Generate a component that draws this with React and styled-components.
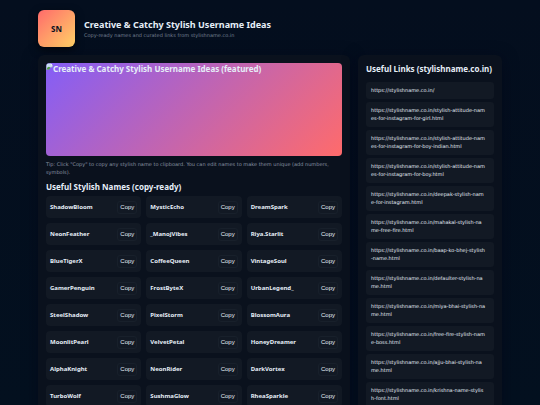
import React, { useState } from 'react';
import styled, { createGlobalStyle } from 'styled-components';

const names = [
  'ShadowBloom', 'MysticEcho', 'DreamSpark',
  'NeonFeather', '_ManojVibes', 'Riya.Starlit',
  'BlueTigerX', 'CoffeeQueen', 'VintageSoul',
  'GamerPenguin', 'FrostByteX', 'UrbanLegend_',
  'SteelShadow', 'PixelStorm', 'BlossomAura',
  'MoonlitPearl', 'VelvetPetal', 'HoneyDreamer',
  'AlphaKnight', 'NeonRider', 'DarkVortex',
  'TurboWolf', 'SushmaGlow', 'RheaSparkle',
];

const links = [
  '',
  'stylish-attitude-names-for-instagram-for-girl.html',
  'stylish-attitude-names-for-instagram-for-boy-indian.html',
  'stylish-attitude-names-for-instagram-for-boy.html',
  'deepak-stylish-name-for-instagram.html',
  'mahakal-stylish-name-free-fire.html',
  'baap-ko-bhej-stylish-name.html',
  'defaulter-stylish-name.html',
  'miya-bhai-stylish-name.html',
  'free-fire-stylish-name-boss.html',
  'ajju-bhai-stylish-name.html',
  'krishna-name-stylish-font.html',
].map(path => `https://stylishname.co.in/${path}`);

const smallFont = `'DejaVu Sans', 'Noto Sans', sans-serif`;

const GlobalStyle = createGlobalStyle`
  * {
    box-sizing: border-box;
  }

  body {
    margin: 0;
    height: 100vh;
    overflow: hidden;
    background: linear-gradient(180deg, #040e1e, #03101f);
    color: #e6eef8;
    font-family: 'Noto Sans', sans-serif;
    font-size: 8px;
  }
`;

const Wrap = styled.div`
  max-width: 480px;
  margin: 0 auto;
  padding: 10px 8px;
`;

const Header = styled.header`
  display: flex;
  align-items: center;
  gap: 9px;
  margin-bottom: 8px;
`;

const Logo = styled.div`
  display: grid;
  place-items: center;
  width: 37px;
  height: 37px;
  border-radius: 6px;
  background: linear-gradient(135deg, #ff6b6b, #ffd166);
  box-shadow: 0 3px 9px rgba(0, 0, 0, 0.6);
  color: #071021;
  font-weight: 700;
`;

const Title = styled.h1`
  margin: 0;
  font-size: 9px;
  line-height: 12px;
`;

const Lead = styled.p`
  margin: 0;
  color: #768193;
  font-family: ${smallFont};
  font-size: 5px;
  line-height: 8px;
`;

const Layout = styled.div`
  display: grid;
  grid-template-columns: minmax(0, 1fr) 144px;
  align-items: start;
  gap: 8px;
`;

const Panel = styled.section`
  padding: 8px;
  border-radius: 6px;
  background: #0a111d;
  box-shadow: 0 3px 15px rgba(2, 6, 23, 0.6);
`;

const Featured = styled.div`
  display: flex;
  align-items: flex-start;
  height: 93px;
  border-radius: 4px;
  overflow: hidden;
  background: linear-gradient(135deg, #845ef7, #ff6b6b);
  font-weight: 700;
  line-height: 12px;
`;

const Tip = styled.p`
  margin: 4px 0 5px;
  color: #8a95a6;
  font-family: ${smallFont};
  font-size: 5px;
  line-height: 8px;
`;

const Heading = styled.h2`
  margin: 0 0 ${p => p.$gap}px;
  font-size: 8px;
  line-height: 11px;
`;

const NameGrid = styled.div`
  display: grid;
  grid-template-columns: repeat(3, minmax(0, 1fr));
  gap: 5px;
`;

const NameCard = styled.div`
  display: flex;
  align-items: center;
  justify-content: space-between;
  height: 22px;
  padding: 0 4px;
  border-radius: 4px;
  background: #121924;
  font-size: 6px;
  font-weight: 700;
`;

const CopyButton = styled.button`
  padding: 2px;
  border: 1px solid #18202b;
  border-radius: 3px;
  background: transparent;
  color: #e6eef8;
  font-family: 'Liberation Sans', sans-serif;
  font-size: 6px;
  line-height: 7px;
  cursor: pointer;
`;

const LinkList = styled.nav`
  display: grid;
  gap: 3px;
`;

const LinkItem = styled.a`
  display: block;
  padding: 4px 8px 5px 5px;
  border-radius: 3px;
  background: #121924;
  color: #e6eef8;
  font-family: ${smallFont};
  font-size: 5px;
  line-height: 8px;
  text-decoration: none;
  word-break: break-all;
`;

const BrokenImage = () => (
  <svg width="7" height="7" viewBox="0 0 16 16" aria-hidden="true">
    <path d="M1 1h10l4 4v4l-7 2-3 4H1z" fill="#c9dcf5" stroke="#93a3ad" />
    <path d="M2 13c2-5 5-6 8-2l-3 4H2z" fill="#4f9a45" />
    <path d="M11 1v4h4z" fill="#fff" />
  </svg>
);

const App = () => {
  const [, setCopied] = useState('');

  const copy = name => {
    navigator.clipboard?.writeText(name);
    setCopied(name);
  };

  return (
    <>
      <GlobalStyle />
      <Wrap>
        <Header>
          <Logo>SN</Logo>
          <div>
            <Title>Creative &amp; Catchy Stylish Username Ideas</Title>
            <Lead>Copy-ready names and curated links from stylishname.co.in</Lead>
          </div>
        </Header>

        <Layout>
          <Panel as="main">
            <Featured>
              <BrokenImage />
              Creative &amp; Catchy Stylish Username Ideas (featured)
            </Featured>
            <Tip>
              Tip: Click "Copy" to copy any stylish name to clipboard. You can edit names to make
              them unique (add numbers, symbols).
            </Tip>
            <Heading $gap={4}>Useful Stylish Names (copy-ready)</Heading>
            <NameGrid>
              {names.map(name => (
                <NameCard key={name}>
                  {name}
                  <CopyButton type="button" onClick={() => copy(name)}>
                    Copy
                  </CopyButton>
                </NameCard>
              ))}
            </NameGrid>
          </Panel>

          <Panel as="aside">
            <Heading $gap={8}>Useful Links (stylishname.co.in)</Heading>
            <LinkList>
              {links.map(link => (
                <LinkItem key={link} href={link}>
                  {link}
                </LinkItem>
              ))}
            </LinkList>
          </Panel>
        </Layout>
      </Wrap>
    </>
  );
};

export default App;
